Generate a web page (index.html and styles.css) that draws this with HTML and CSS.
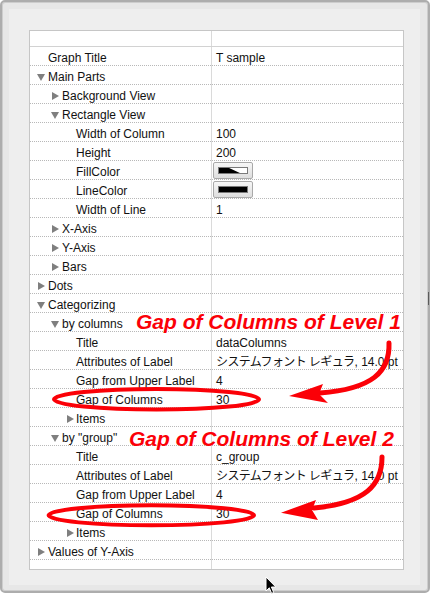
FILE: index.html
```html
<!DOCTYPE html>
<html>
<head>
<meta charset="utf-8">
<link rel="stylesheet" href="styles.css">
</head>
<body>
<div class="window">
  <div class="panel">
    <div class="table">
      <div class="header"></div>

      <div class="row"><div class="label l0"><span class="disc"></span><span class="txt">Graph Title</span></div><div class="value"><span class="txt">T sample</span></div></div>
      <div class="row"><div class="label l0"><span class="disc"><svg class="open" width="8" height="7" viewBox="0 0 8 7"><polygon points="0,0 8,0 4,7"/></svg></span><span class="txt">Main Parts</span></div><div class="value"></div></div>
      <div class="row"><div class="label l1"><span class="disc"><svg class="closed" width="7" height="8" viewBox="0 0 7 8"><polygon points="0,0 7,4 0,8"/></svg></span><span class="txt">Background View</span></div><div class="value"></div></div>
      <div class="row"><div class="label l1"><span class="disc"><svg class="open" width="8" height="7" viewBox="0 0 8 7"><polygon points="0,0 8,0 4,7"/></svg></span><span class="txt">Rectangle View</span></div><div class="value"></div></div>
      <div class="row"><div class="label l2"><span class="disc"></span><span class="txt">Width of Column</span></div><div class="value"><span class="txt">100</span></div></div>
      <div class="row"><div class="label l2"><span class="disc"></span><span class="txt">Height</span></div><div class="value"><span class="txt">200</span></div></div>
      <div class="row"><div class="label l2"><span class="disc"></span><span class="txt">FillColor</span></div><div class="value"><span class="well"><svg class="swatch" width="30" height="7" viewBox="0 0 30 7"><rect x="0" y="0" width="30" height="7" fill="#fff"/><polygon points="0,0 9,0 24,7 0,7" fill="#000"/><rect x="0.5" y="0.5" width="29" height="6" fill="none" stroke="#7a7a7a"/></svg></span></div></div>
      <div class="row"><div class="label l2"><span class="disc"></span><span class="txt">LineColor</span></div><div class="value"><span class="well"><svg class="swatch" width="30" height="7" viewBox="0 0 30 7"><rect x="0" y="0" width="30" height="7" fill="#000"/><rect x="0.5" y="0.5" width="29" height="6" fill="none" stroke="#7a7a7a"/></svg></span></div></div>
      <div class="row"><div class="label l2"><span class="disc"></span><span class="txt">Width of Line</span></div><div class="value"><span class="txt">1</span></div></div>
      <div class="row"><div class="label l1"><span class="disc"><svg class="closed" width="7" height="8" viewBox="0 0 7 8"><polygon points="0,0 7,4 0,8"/></svg></span><span class="txt">X-Axis</span></div><div class="value"></div></div>
      <div class="row"><div class="label l1"><span class="disc"><svg class="closed" width="7" height="8" viewBox="0 0 7 8"><polygon points="0,0 7,4 0,8"/></svg></span><span class="txt">Y-Axis</span></div><div class="value"></div></div>
      <div class="row"><div class="label l1"><span class="disc"><svg class="closed" width="7" height="8" viewBox="0 0 7 8"><polygon points="0,0 7,4 0,8"/></svg></span><span class="txt">Bars</span></div><div class="value"></div></div>
      <div class="row"><div class="label l0"><span class="disc"><svg class="closed" width="7" height="8" viewBox="0 0 7 8"><polygon points="0,0 7,4 0,8"/></svg></span><span class="txt">Dots</span></div><div class="value"></div></div>
      <div class="row"><div class="label l0"><span class="disc"><svg class="open" width="8" height="7" viewBox="0 0 8 7"><polygon points="0,0 8,0 4,7"/></svg></span><span class="txt">Categorizing</span></div><div class="value"></div></div>
      <div class="row"><div class="label l1"><span class="disc"><svg class="open" width="8" height="7" viewBox="0 0 8 7"><polygon points="0,0 8,0 4,7"/></svg></span><span class="txt">by columns</span></div><div class="value"></div></div>
      <div class="row"><div class="label l2"><span class="disc"></span><span class="txt">Title</span></div><div class="value"><span class="txt">dataColumns</span></div></div>
      <div class="row"><div class="label l2"><span class="disc"></span><span class="txt">Attributes of Label</span></div><div class="value"><span class="txt"><span class="jp">システムフォント レギュラ</span>, 14.0 pt</span></div></div>
      <div class="row"><div class="label l2"><span class="disc"></span><span class="txt">Gap from Upper Label</span></div><div class="value"><span class="txt">4</span></div></div>
      <div class="row"><div class="label l2"><span class="disc"></span><span class="txt">Gap of Columns</span></div><div class="value"><span class="txt">30</span></div></div>
      <div class="row"><div class="label l2"><span class="disc sub"><svg class="closed" width="7" height="8" viewBox="0 0 7 8"><polygon points="0,0 7,4 0,8"/></svg></span><span class="txt">Items</span></div><div class="value"></div></div>
      <div class="row"><div class="label l1"><span class="disc"><svg class="open" width="8" height="7" viewBox="0 0 8 7"><polygon points="0,0 8,0 4,7"/></svg></span><span class="txt">by "group"</span></div><div class="value"></div></div>
      <div class="row"><div class="label l2"><span class="disc"></span><span class="txt">Title</span></div><div class="value"><span class="txt">c_group</span></div></div>
      <div class="row"><div class="label l2"><span class="disc"></span><span class="txt">Attributes of Label</span></div><div class="value"><span class="txt"><span class="jp">システムフォント レギュラ</span>, 14.0 pt</span></div></div>
      <div class="row"><div class="label l2"><span class="disc"></span><span class="txt">Gap from Upper Label</span></div><div class="value"><span class="txt">4</span></div></div>
      <div class="row"><div class="label l2"><span class="disc"></span><span class="txt">Gap of Columns</span></div><div class="value"><span class="txt">30</span></div></div>
      <div class="row"><div class="label l2"><span class="disc sub"><svg class="closed" width="7" height="8" viewBox="0 0 7 8"><polygon points="0,0 7,4 0,8"/></svg></span><span class="txt">Items</span></div><div class="value"></div></div>
      <div class="row"><div class="label l0"><span class="disc"><svg class="closed" width="7" height="8" viewBox="0 0 7 8"><polygon points="0,0 7,4 0,8"/></svg></span><span class="txt">Values of Y-Axis</span></div><div class="value"></div></div>
    </div>
  </div>
</div>

<div class="grip"></div>

<svg class="annot" width="432" height="597" viewBox="0 0 432 597">
  <g fill="none" stroke="#fb0007">
    <ellipse cx="156.5" cy="399.3" rx="102.5" ry="10.3" stroke-width="4"/>
    <ellipse cx="151.3" cy="515.3" rx="102.7" ry="10" stroke-width="4"/>
    <path d="M389,343 C390,372 372,389 320,393" stroke-width="5" stroke-linecap="round"/>
    <path d="M382,457 C382,485 366,503 314,508" stroke-width="5" stroke-linecap="round"/>
  </g>
  <g fill="#fb0007">
    <polygon points="289,396 323,384 319,394 328,403"/>
    <polygon points="281,512.7 316,500 312,510 318,520"/>
  </g>
</svg>

<div class="note note1">Gap of Columns of Level 1</div>
<div class="note note2">Gap of Columns of Level 2</div>

<svg class="cursor" width="12" height="19" viewBox="0 0 12 19">
  <path d="M1,1 L1,15 L4.3,11.8 L6.6,17.4 L8.7,16.5 L6.4,11 L10.8,11 Z" fill="#000" stroke="#fff" stroke-width="1" stroke-linejoin="round"/>
</svg>
</body>
</html>
```

FILE: styles.css
```css
html, body {
  margin: 0;
  padding: 0;
}

body {
  position: relative;
  width: 432px;
  height: 597px;
  overflow: hidden;
  background: #ffffff;
  font-family: "Liberation Sans", "Noto Sans CJK JP", sans-serif;
  font-size: 12px;
  color: #111111;
}

.window {
  box-sizing: border-box;
  width: 430px;
  height: 593px;
  border: 2px solid #adadad;
  border-radius: 5px;
  box-shadow: inset 0 0 0 1px #cdcdcd;
  background: #e7e7e7;
  padding: 7px 8px 6px 7px;
}

.panel {
  box-sizing: border-box;
  height: 100%;
  background: #eeeeee;
  padding: 21px 16px 15px 20px;
}

.table {
  box-sizing: border-box;
  height: 100%;
  border: 1px solid #c6c6c6;
  background-color: #ffffff;
  background-image: linear-gradient(90deg, transparent 181px, #dadada 181px, #dadada 182px, transparent 182px);
  overflow: hidden;
}

.header {
  height: 15px;
  border-bottom: 1px solid #d2d2d2;
}

.row {
  box-sizing: border-box;
  height: 19px;
  display: grid;
  grid-template-columns: 182px 1fr;
  border-bottom: 1px dotted #b8b8b8;
}

.label,
.value {
  display: flex;
  align-items: flex-start;
  height: 18px;
  white-space: nowrap;
  overflow: hidden;
}

.label.l0 { padding-left: 4px; }
.label.l1 { padding-left: 18px; }
.label.l2 { padding-left: 32px; }

.value {
  padding-left: 4px;
}

.txt {
  padding-top: 4px;
  line-height: 14px;
}

.jp {
  letter-spacing: -0.6px;
}

.disc {
  flex: none;
  width: 14px;
  height: 18px;
  position: relative;
}

.disc svg {
  display: block;
  fill: #7f7f7f;
}

.disc svg.open {
  margin-top: 8px;
  margin-left: 3px;
}

.disc svg.closed {
  margin-top: 7px;
  margin-left: 4px;
}

.disc.sub svg.closed {
  margin-left: 5px;
}

.well {
  box-sizing: border-box;
  display: flex;
  align-items: center;
  justify-content: flex-start;
  width: 40px;
  height: 17px;
  margin-left: -3px;
  margin-top: 1px;
  padding-left: 4px;
  border: 1px solid #a9a9a9;
  border-radius: 2px;
  background: linear-gradient(#f7f7f7, #dedede);
}

.swatch {
  display: block;
}

.grip {
  position: absolute;
  left: 428px;
  top: 292px;
  width: 1px;
  height: 13px;
  background: #5a5a5a;
}

.annot {
  position: absolute;
  left: 0;
  top: 0;
  pointer-events: none;
}

.note {
  position: absolute;
  font-family: "Liberation Sans", "Arial", sans-serif;
  font-weight: bold;
  font-style: italic;
  font-size: 21px;
  line-height: 21px;
  color: #fb0007;
  white-space: nowrap;
}

.note1 {
  left: 136px;
  top: 311px;
}

.note2 {
  left: 129px;
  top: 428px;
}

.cursor {
  position: absolute;
  left: 265px;
  top: 576px;
}
```
